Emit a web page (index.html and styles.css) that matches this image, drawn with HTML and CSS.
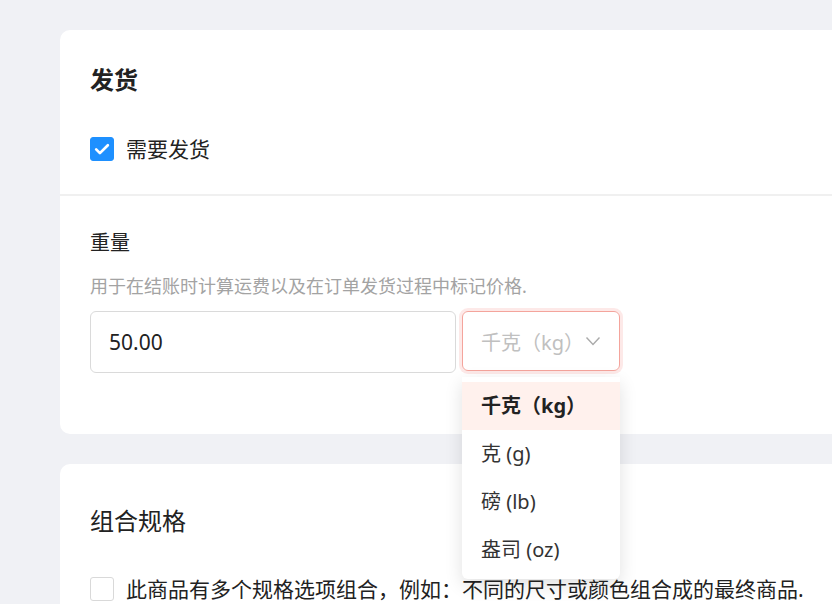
FILE: index.html
```html
<!DOCTYPE html>
<html lang="zh-CN">
<head>
  <meta charset="UTF-8">
  <meta name="viewport" content="width=device-width, initial-scale=1.0">
  <title>发货设置</title>
  <link rel="stylesheet" href="styles.css">
</head>
<body>

<div class="page">
  <div class="card">
    <div class="card-section">
      <h2 class="card-title bold">发货</h2>
      <label class="check-row first-check">
        <span class="checkbox checked">
          <svg viewBox="0 0 24 24" width="20" height="20"><path d="M5 12.5l4.5 4.5L19 7.5" fill="none" stroke="#fff" stroke-width="3.2" stroke-linecap="round" stroke-linejoin="round"/></svg>
        </span>
        <span>需要发货</span>
      </label>
    </div>
    <div class="card-section weight-section">
      <div class="field-label">重量</div>
      <div class="field-help">用于在结账时计算运费以及在订单发货过程中标记价格.</div>
      <div class="weight-row">
        <div class="input">50.00</div>
        <div class="select-wrap">
          <div class="select">
            <span>千克（kg）</span>
            <svg viewBox="0 0 16 12" width="16" height="12"><path d="M1.5 2.5L8 9.5l6.5-7" fill="none" stroke="#aaa" stroke-width="1.4"/></svg>
          </div>
          <ul class="dropdown">
            <li class="active">千克（kg）</li>
            <li>克 (g)</li>
            <li>磅 (lb)</li>
            <li>盎司 (oz)</li>
          </ul>
        </div>
      </div>
    </div>
  </div>

  <div class="card last">
    <div class="card-section variant-section">
      <h2 class="card-title">组合规格</h2>
      <label class="check-row variant-check">
        <span class="checkbox"></span>
        <span>此商品有多个规格选项组合，例如：不同的尺寸或颜色组合成的最终商品.</span>
      </label>
    </div>
  </div>
</div>

</body>
</html>
```

FILE: styles.css
```css
html,
body {
  height: 100%;
}
body {
  margin: 0;
  background-color: #f0f1f5;
  font-family: "Noto Sans", "Noto Sans CJK SC", sans-serif;
  color: #222;
  overflow: hidden;
}
.page {
  padding: 30px 0 0 60px;
}
.card {
  background-color: #fff;
  border-radius: 10px 0 0 10px;
  margin-bottom: 30px;
}
.card.last {
  margin-bottom: 0;
  height: 140px;
  border-radius: 10px 0 0 0;
}
.card-section {
  padding: 35px 30px 30px;
}
.card-section + .card-section {
  border-top: 2px solid #f0f0f0;
}
.card-title {
  margin: 0;
  font-size: 24px;
  line-height: 30px;
  font-weight: normal;
  color: #222;
}
.card-title.bold {
  font-weight: bold;
}
.check-row {
  display: flex;
  align-items: center;
  gap: 12px;
  font-size: 21px;
  line-height: 30px;
  white-space: nowrap;
}
.first-check {
  margin-top: 39px;
}
.checkbox {
  width: 22px;
  height: 22px;
  border: 1px solid #d9d9d9;
  border-radius: 3px;
  display: flex;
  align-items: center;
  justify-content: center;
  flex-shrink: 0;
}
.checkbox.checked {
  background-color: #1e90ff;
  border-color: #1e90ff;
}
.weight-section {
  padding-top: 34px;
  padding-bottom: 61px;
}
.field-label {
  font-size: 20px;
  line-height: 26px;
}
.field-help {
  margin-top: 18px;
  font-size: 18px;
  line-height: 24px;
  color: #a3a3a3;
}
.weight-row {
  display: flex;
  gap: 6px;
  margin-top: 13px;
}
.input {
  width: 366px;
  height: 62px;
  box-sizing: border-box;
  border: 1px solid #dadada;
  border-radius: 6px;
  padding: 0 18px;
  font-size: 21px;
  display: flex;
  align-items: center;
}
.select-wrap {
  position: relative;
}
.select {
  width: 158px;
  height: 60px;
  box-sizing: border-box;
  border: 1px solid #f4a49c;
  border-radius: 6px;
  box-shadow: 0 0 0 3px rgba(245, 120, 110, 0.16);
  padding: 0 18px;
  display: flex;
  align-items: center;
  justify-content: space-between;
  font-size: 20px;
  color: #c0c0c0;
}
.dropdown {
  position: absolute;
  top: 66px;
  left: 0;
  width: 158px;
  margin: 0;
  padding: 5px 0;
  list-style: none;
  background-color: #fff;
  border-radius: 0 0 6px 6px;
  box-shadow: 0 6px 18px rgba(0, 0, 0, 0.12);
  z-index: 2;
}
.dropdown li {
  height: 48px;
  line-height: 48px;
  padding: 0 19px;
  font-size: 20px;
  color: #333;
}
.dropdown li.active {
  background-color: #fff1ed;
  font-weight: bold;
  color: #222;
}
.variant-section {
  padding-top: 42px;
}
.variant-check {
  margin-top: 38px;
}
```
